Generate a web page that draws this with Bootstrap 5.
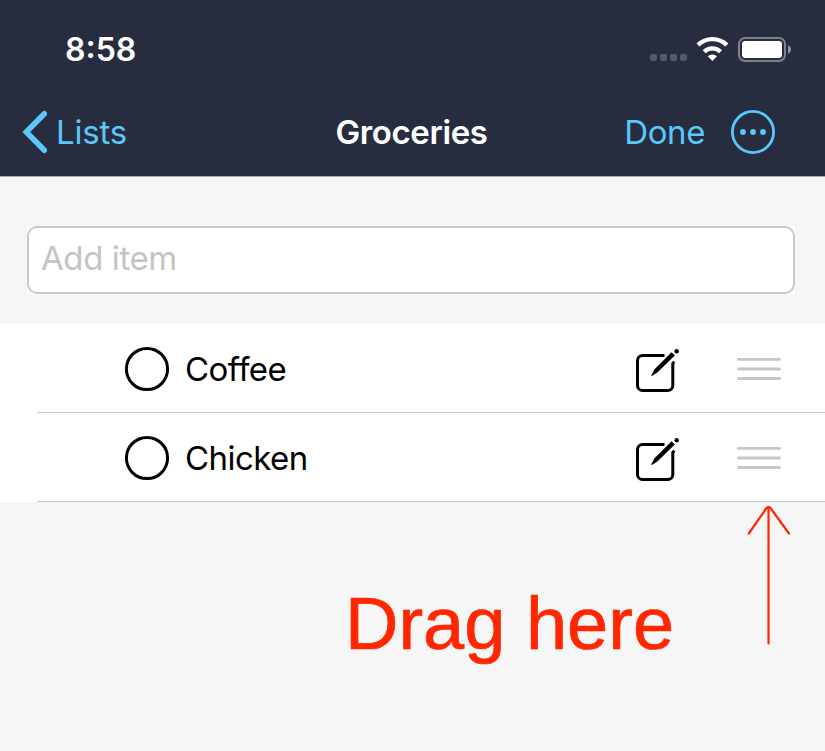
<!DOCTYPE html>
<html lang="en">
<head>
<meta charset="utf-8">
<meta name="viewport" content="width=device-width, initial-scale=1">
<title>Groceries</title>
<link href="https://cdn.jsdelivr.net/npm/bootstrap@5.3.0/dist/css/bootstrap.min.css" rel="stylesheet">
<style>
  body { background: #f6f6f6; font-family: Inter, "Liberation Sans", sans-serif; font-size: 33px; line-height: 40px; color: #000; overflow: hidden; }
  svg { display: block; flex: none; }
  .app-header { background: #272d3f; border-bottom: 1px solid #aaa9ae; height: 177px; }
  .status-row { height: 99px; padding: 1px 34px 0 65px; }
  .status-icons { margin-top: -1px; }
  .clock { font-weight: 600; font-size: 32px; letter-spacing: 0; }
  .title-row { height: 66px; padding: 0 24px 0 22px; display: grid; grid-template-columns: 1fr auto 1fr; }
  .title-row a { color: #5ac8fa; }
  .title-text { font-weight: 600; font-size: 33px; letter-spacing: -.4px; }
  .title-actions { padding-right: 26px; }
  .lists-label { margin-left: 9px; letter-spacing: -.2px; }
  .done-label { margin-right: 26px; letter-spacing: -.4px; }
  .add-wrap { padding: 49px 30px 30px 27px; }
  .add-back { background: #fff; }
  .add-field { height: 68px; border: 2px solid #c9c9ca; border-radius: 10px; padding: 0 12px 4px; font-size: 33px; line-height: 60px; letter-spacing: -.4px; }
  .add-field::placeholder { color: #c4c4c6; opacity: 1; }
  .add-field:focus { box-shadow: none; border-color: #c9c9ca; }
  .item-list { background: #fff; padding-left: 37px; }
  .item-row { height: 89px; border-bottom: 1px solid #c8c7cc; padding: 2px 44px 0 87px; }
  .item-name { margin-left: 15px; letter-spacing: -.55px; }
  .pen { margin-right: 56px; }
  .note { padding: 0 35px 0 345px; }
  .note-text { font: 74px/84px "Liberation Sans", Arial, sans-serif; color: #ff2600; -webkit-text-stroke: .7px #ff2600; margin-top: 80px; white-space: nowrap; }
</style>
</head>
<body>
<svg width="0" height="0" class="position-absolute" aria-hidden="true">
  <symbol id="compose" viewBox="0 0 46 48">
    <path d="M29.500 10.500H7.500A5 5 0 0 0 2.500 15.500V40.500A5 5 0 0 0 7.500 45.500H32.800A5 5 0 0 0 37.800 40.500V18.500L39.300 16.800" fill="none" stroke="#000" stroke-width="3"/>
    <path d="M36.600 7.300 39.800 10.500 22.600 27.200 17 30.900Q16.200 31 16.400 30.100L19.500 24.200Z"/>
    <circle cx="41.700" cy="6.300" r="2.200"/>
  </symbol>
  <symbol id="grip" viewBox="0 0 44 24">
    <path d="M1.400 2.300H42.600M1.400 12H42.600M1.400 21.500H42.600" fill="none" stroke="#c7c7c9" stroke-width="2.800" stroke-linecap="round"/>
  </symbol>
</svg>

<header class="app-header">
  <div class="status-row d-flex align-items-center justify-content-between">
    <div class="clock text-white">8:58</div>
    <svg class="status-icons" width="142" height="30" viewBox="0 0 142 30">
      <g fill="#555a68"><rect x="1" y="19" width="7" height="7" rx="2"/><rect x="11" y="19" width="7" height="7" rx="2"/><rect x="21" y="19" width="7" height="7" rx="2"/><rect x="31" y="19" width="7" height="7" rx="2"/></g>
      <g fill="none" stroke="#fff"><path d="M49 10A20.500 20.500 0 0 1 77.800 10" stroke-width="4.400"/><path d="M55.200 16.700A11.700 11.700 0 0 1 71.600 16.700" stroke-width="4.200"/></g>
      <path d="M58.800 21.300A7 7 0 0 1 68 21.300L63.400 26Z" fill="#fff"/>
      <rect x="90" y="3" width="46" height="23" rx="6" fill="none" stroke="#7d818c" stroke-width="2"/>
      <rect x="93" y="6" width="40" height="17" rx="3.200" fill="#fff"/>
      <path d="M139 10.300Q142 11.500 142 14.500T139 18.700Z" fill="#8f929b"/>
    </svg>
  </div>
  <nav class="title-row align-items-center">
    <a href="#" class="d-flex align-items-center text-decoration-none">
      <svg width="25" height="44" viewBox="0 0 25 44"><path d="M22.300 3.700 4.300 22 22.300 40.300" fill="none" stroke="#5ac8fa" stroke-width="5.600" stroke-linecap="round" stroke-linejoin="miter"/></svg>
      <span class="lists-label">Lists</span>
    </a>
    <span class="title-text text-white">Groceries</span>
    <div class="title-actions d-flex align-items-center justify-content-end">
      <a href="#" class="done-label text-decoration-none">Done</a>
      <a href="#" aria-label="More"><svg width="44" height="44" viewBox="0 0 44 44" fill="#5ac8fa"><circle cx="22" cy="22" r="20.600" fill="none" stroke="#5ac8fa" stroke-width="2.800"/><circle cx="12" cy="22" r="2.900"/><circle cx="22" cy="22" r="2.900"/><circle cx="32" cy="22" r="2.900"/></svg></a>
    </div>
  </nav>
</header>

<main>
  <div class="add-wrap"><div class="add-back"><input class="form-control add-field" type="text" placeholder="Add item"></div></div>
  <ul class="item-list list-unstyled mb-0">
    <li class="item-row d-flex align-items-center">
      <svg width="46" height="46" viewBox="0 0 46 46"><circle cx="23" cy="23" r="20.600" fill="none" stroke="#000" stroke-width="3"/></svg>
      <span class="item-name me-auto">Coffee</span>
      <svg class="pen" width="46" height="48"><use href="#compose"/></svg>
      <svg width="44" height="24"><use href="#grip"/></svg>
    </li>
    <li class="item-row d-flex align-items-center">
      <svg width="46" height="46" viewBox="0 0 46 46"><circle cx="23" cy="23" r="20.600" fill="none" stroke="#000" stroke-width="3"/></svg>
      <span class="item-name me-auto">Chicken</span>
      <svg class="pen" width="46" height="48"><use href="#compose"/></svg>
      <svg width="44" height="24"><use href="#grip"/></svg>
    </li>
  </ul>
  <div class="note d-flex justify-content-between">
    <div class="note-text">Drag here</div>
    <svg width="44" height="146" viewBox="0 0 44 146" fill="none" stroke="#ff2600" stroke-width="2.200" stroke-linecap="round" stroke-linejoin="round"><path d="M22.500 5V141.500M2.800 31.500 20.500 6Q22.500 3.500 24.500 6L43 31.500"/></svg>
  </div>
</main>
<script src="https://cdn.jsdelivr.net/npm/bootstrap@5.3.0/dist/js/bootstrap.bundle.min.js"></script>
</body>
</html>
